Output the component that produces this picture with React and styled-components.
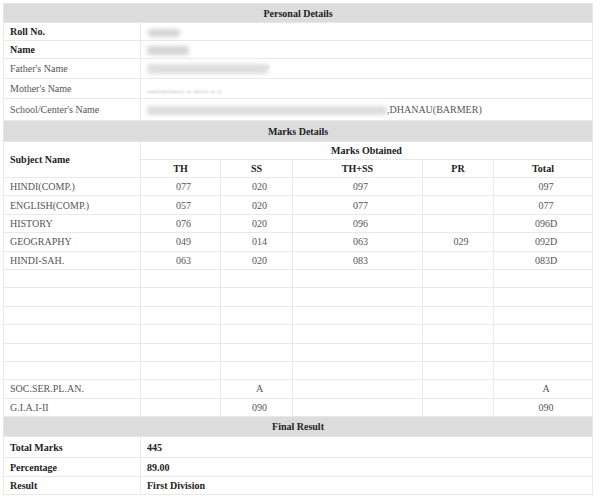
import React from "react";
import styled, { createGlobalStyle } from "styled-components";

const GlobalStyle = createGlobalStyle`
  html, body {
    margin: 0;
    padding: 0;
    background: #ffffff;
  }
  body {
    font-family: "Liberation Serif", "Times New Roman", serif;
  }
`;

const Page = styled.div`
  padding: 3px 10px 4px 3px;
  width: 602px;
  box-sizing: border-box;
`;

const Table = styled.table`
  width: 589px;
  border-collapse: collapse;
  table-layout: fixed;
  font-size: 10px;
  color: #555;
  border: 1px solid #e6e6e6;
`;

const Row = styled.tr`
  height: ${props => props.h || 18}px;
`;

const SectionHead = styled.th`
  background: #dcdcdc;
  color: #222;
  font-weight: bold;
  text-align: center;
  padding: 0;
  border: 1px solid #e6e6e6;
`;

const Cell = styled.td`
  border: 1px solid #e9e9e9;
  padding: 0 0 0 ${props => props.pad || 6}px;
  text-align: ${props => props.align || "left"};
  font-weight: ${props => (props.bold ? "bold" : "normal")};
  color: ${props => (props.bold ? "#222" : "#555")};
  white-space: nowrap;
  vertical-align: middle;
  background: #fff;
`;

const ColHead = styled.th`
  border: 1px solid #e9e9e9;
  color: #222;
  font-weight: bold;
  text-align: ${props => props.align || "center"};
  padding: 0 0 0 ${props => props.pad || 0}px;
  vertical-align: middle;
`;

const Blur = styled.span`
  display: inline-block;
  vertical-align: middle;
  width: ${props => props.w}px;
  height: ${props => props.h || 8}px;
  background: ${props => props.tone || "#d4d4d4"};
  filter: blur(2px);
  border-radius: 3px;
  margin-left: ${props => props.ml || 0}px;
`;

const Smudge = styled.span`
  display: inline-block;
  color: #777;
  font-size: 8px;
  letter-spacing: 0.2px;
  filter: blur(0.8px);
`;

const personal = [
  { label: "Roll No.", bold: true, h: 18, value: <Blur w={32} h={8} ml={1} /> },
  { label: "Name", bold: true, h: 18, value: <Blur w={42} h={9} /> },
  {
    label: "Father's Name",
    h: 20,
    value: (
      <>
        <Blur w={121} h={10} tone="#dedede" />
        <Smudge>'</Smudge>
      </>
    )
  },
  {
    label: "Mother's Name",
    h: 20,
    value: <Smudge>,,,,,,,,,,,,,,,,, ,, ,,,,,,, ,, ,,</Smudge>
  },
  {
    label: "School/Center's Name",
    h: 22,
    value: (
      <>
        <Blur w={240} h={9} tone="#dcdcdc" />
        ,DHANAU(BARMER)
      </>
    )
  }
];

const subjects = [
  ["HINDI(COMP.)", "077", "020", "097", "", "097"],
  ["ENGLISH(COMP.)", "057", "020", "077", "", "077"],
  ["HISTORY", "076", "020", "096", "", "096D"],
  ["GEOGRAPHY", "049", "014", "063", "029", "092D"],
  ["HINDI-SAH.", "063", "020", "083", "", "083D"],
  ["", "", "", "", "", ""],
  ["", "", "", "", "", ""],
  ["", "", "", "", "", ""],
  ["", "", "", "", "", ""],
  ["", "", "", "", "", ""],
  ["", "", "", "", "", ""],
  ["SOC.SER.PL.AN.", "", "A", "", "", "A"],
  ["G.I.A.I-II", "", "090", "", "", "090"]
];

const finalResult = [
  { label: "Total Marks", value: "445", h: 21 },
  { label: "Percentage", value: "89.00", h: 19 },
  { label: "Result", value: "First Division", h: 18 }
];

export default function App() {
  return (
    <Page>
      <GlobalStyle />
      <Table>
        <colgroup>
          <col style={{ width: 137 }} />
          <col style={{ width: 80 }} />
          <col style={{ width: 72 }} />
          <col style={{ width: 130 }} />
          <col style={{ width: 71 }} />
          <col style={{ width: 99 }} />
        </colgroup>
        <tbody>
          <Row h={19}>
            <SectionHead colSpan={6}>Personal Details</SectionHead>
          </Row>
          {personal.map(p => (
            <Row h={p.h} key={p.label}>
              <Cell bold={p.bold}>{p.label}</Cell>
              <Cell colSpan={5}>{p.value}</Cell>
            </Row>
          ))}
          <Row h={21}>
            <SectionHead colSpan={6}>Marks Details</SectionHead>
          </Row>
          <Row h={18}>
            <ColHead rowSpan={2} align="left" pad={6}>
              Subject Name
            </ColHead>
            <ColHead colSpan={5}>Marks Obtained</ColHead>
          </Row>
          <Row h={18}>
            <ColHead>TH</ColHead>
            <ColHead>SS</ColHead>
            <ColHead>TH+SS</ColHead>
            <ColHead>PR</ColHead>
            <ColHead>Total</ColHead>
          </Row>
          {subjects.map((s, i) => (
            <Row h={18.4} key={i}>
              <Cell>{s[0]}</Cell>
              {s.slice(1).map((v, j) => (
                <Cell key={j} align="center" pad={0}>
                  {v}
                </Cell>
              ))}
            </Row>
          ))}
          <Row h={20}>
            <SectionHead colSpan={6}>Final Result</SectionHead>
          </Row>
          {finalResult.map(r => (
            <Row h={r.h} key={r.label}>
              <Cell bold>{r.label}</Cell>
              <Cell bold colSpan={5}>
                {r.value}
              </Cell>
            </Row>
          ))}
        </tbody>
      </Table>
    </Page>
  );
}
